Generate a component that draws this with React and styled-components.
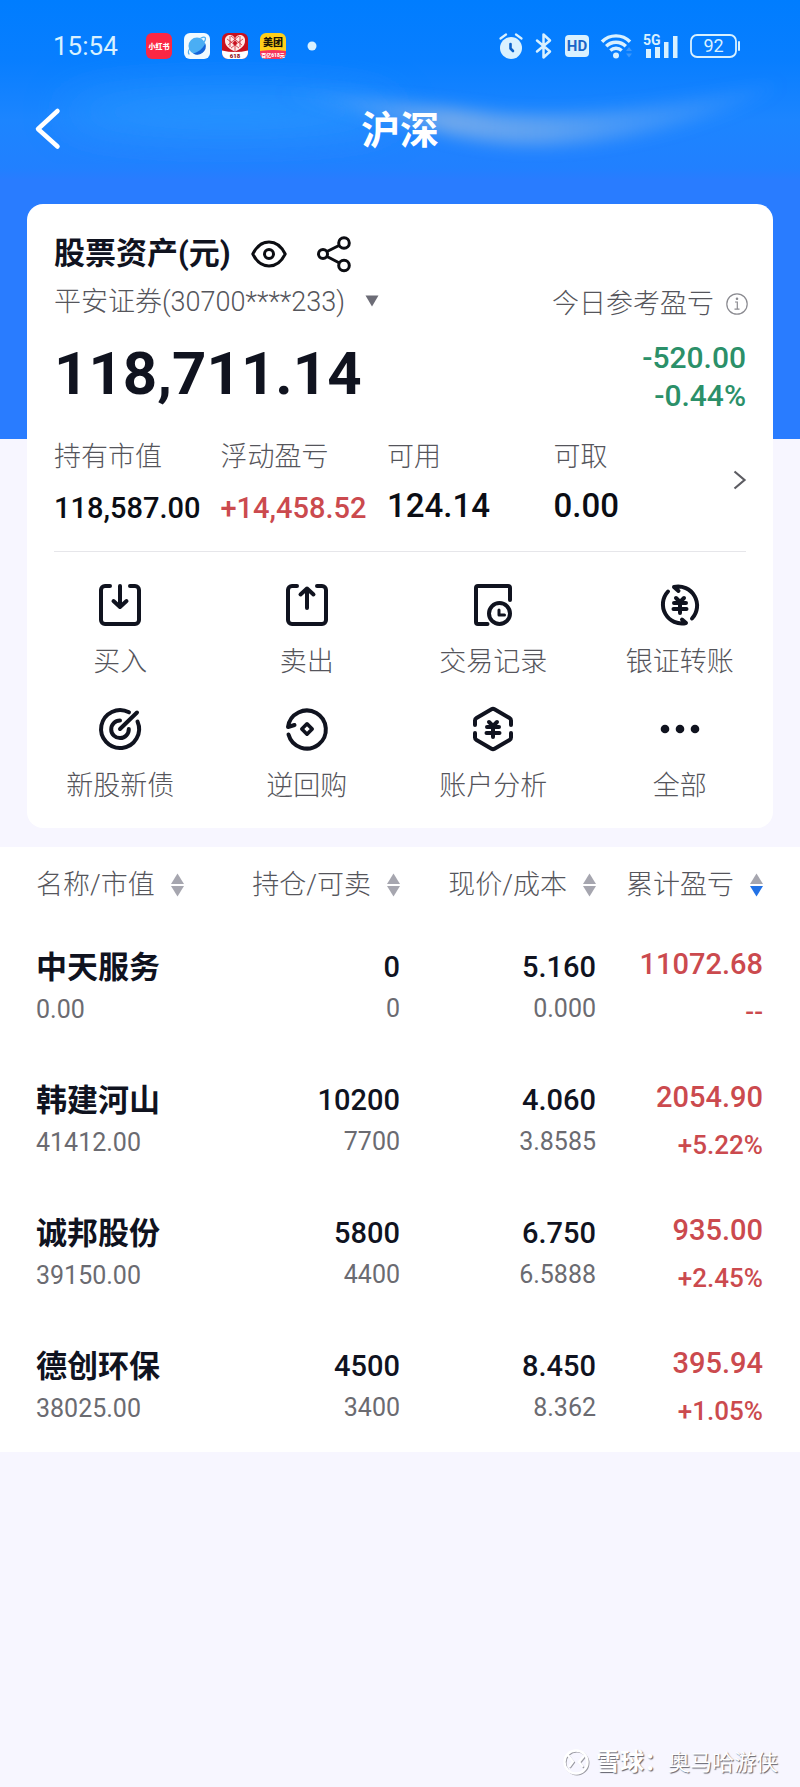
import React from "react";
import styled, { createGlobalStyle } from "styled-components";

const INK = "#10131f";
const GREY = "#55555b";
const RED = "#cb4a4e";
const GREEN = "#2b9069";

const GlobalStyle = createGlobalStyle`
  * { box-sizing: border-box; }
  body {
    margin: 0;
    background: #f7f6ff;
    color: ${INK};
    font-family: Roboto, "Noto Sans CJK SC", sans-serif;
    -webkit-font-smoothing: antialiased;
  }
  button, select {
    margin: 0;
    padding: 0;
    border: 0;
    background: none;
    color: inherit;
    font: inherit;
    cursor: pointer;
  }
  h1, h2, p, dl, dd { margin: 0; }
  svg { display: block; flex: none; overflow: visible; }
`;

const Page = styled.div`
  min-height: 100vh;
  display: flex;
  flex-direction: column;
`;

const Hero = styled.div`
  position: relative;
  padding-bottom: 19px;
  background: linear-gradient(
      #007dff 0,
      #087eff 60px,
      #1c85ff 120px,
      #2180ff 168px,
      #297cff 180px,
      #297cff 100%
    )
    no-repeat 0 0 / 100% 439px;
`;

const Glow = styled.svg`
  position: absolute;
  inset: 0 0 auto;
  width: 100%;
  height: 180px;
  overflow: hidden;
`;

const StatusBar = styled.div`
  position: relative;
  height: 92px;
  padding: 0 60px 0 53px;
  display: flex;
  align-items: center;
  justify-content: space-between;
  color: #d9f1ff;
`;

const StatusGroup = styled.div`
  display: flex;
  align-items: center;
  gap: 12px;
`;

const Clock = styled.time`
  margin-right: 16px;
  font-size: 26px;
  line-height: 32px;
`;

const NavBar = styled.header`
  position: relative;
  height: 74px;
  padding: 0 35px;
  display: grid;
  grid-template-columns: 1fr auto 1fr;
  align-items: center;
  color: #fff;
`;

const BackButton = styled.button`
  justify-self: start;
`;

const NavTitle = styled.h1`
  padding-top: 4px;
  font-size: 39px;
  line-height: 48px;
  font-weight: 700;
`;

const Card = styled.section`
  position: relative;
  margin: 38px 27px 0;
  padding: 26px 0 24px;
  border-radius: 16px;
  background: #fff;
`;

const CardTitleRow = styled.div`
  height: 48px;
  padding: 0 27px;
  display: flex;
  align-items: center;
`;

const CardTitle = styled.h2`
  margin-right: 20px;
  font-size: 31px;
  line-height: 48px;
  font-weight: 700;
`;

const IconButton = styled.button`
  margin-right: 30px;
`;

const Summary = styled.div`
  padding: 0 27px;
  display: flex;
  justify-content: space-between;
`;

const AccountPicker = styled.label`
  position: relative;
  display: block;
  width: fit-content;
  height: 48px;
  color: ${GREY};
`;

const AccountSelect = styled.select`
  appearance: none;
  field-sizing: content;
  height: 48px;
  padding-right: 34px;
  font-size: 27px;
  font-weight: 300;
`;

const PickerArrow = styled.svg`
  position: absolute;
  top: 17px;
  right: 0;
  pointer-events: none;
`;

const Total = styled.p`
  margin-top: 18px;
  font-size: 60px;
  line-height: 60px;
  font-weight: 700;
`;

const Today = styled.div`
  padding-top: 2px;
  display: flex;
  flex-direction: column;
  align-items: flex-end;
`;

const TodayLabel = styled.div`
  margin: 0 -2px 11px 0;
  display: flex;
  align-items: center;
  gap: 12px;
  color: ${GREY};
  font-size: 27px;
  line-height: 48px;
  font-weight: 300;
`;

const TodayValue = styled.p`
  color: ${GREEN};
  font-size: 30px;
  line-height: 38px;
  font-weight: 500;
`;

const Metrics = styled.div`
  margin: 24px 27px 0;
  padding-bottom: 21px;
  display: flex;
  align-items: center;
  border-bottom: 1px solid #e6e6ea;
`;

const MetricList = styled.dl`
  flex: 1;
  display: grid;
  grid-template-columns: repeat(4, 1fr);
`;

const MetricLabel = styled.dt`
  color: ${GREY};
  font-size: 27px;
  line-height: 36px;
  font-weight: 300;
`;

const MetricValue = styled.dd`
  margin-top: 11px;
  color: ${(p) => p.$color || "#0b0d14"};
  font-size: ${(p) => (p.$large ? 33 : 29)}px;
  line-height: ${(p) => (p.$large ? 40 : 44)}px;
  font-weight: 500;
  white-space: nowrap;
`;

const MoreButton = styled.button`
  width: 26px;
  padding-bottom: 10px;
  display: flex;
  justify-content: flex-end;
`;

const Actions = styled.nav`
  padding-top: 32px;
  display: grid;
  grid-template-columns: repeat(4, 1fr);
  row-gap: 28px;
`;

const Action = styled.button`
  display: flex;
  flex-direction: column;
  align-items: center;
  gap: 18px;
`;

const ActionLabel = styled.span`
  color: ${GREY};
  font-size: 27px;
  line-height: 36px;
  font-weight: 300;
`;

const Holdings = styled.table`
  width: 100%;
  table-layout: fixed;
  border-collapse: collapse;
  background: #fff;
`;

const HeadCell = styled.th`
  width: ${(p) => p.$width};
  height: 73px;
  padding: ${(p) => p.$pad || "2px 0 0"};
  text-align: ${(p) => (p.$left ? "left" : "right")};
  color: ${GREY};
  font-size: 27px;
  font-weight: 300;
  white-space: nowrap;
`;

const SortButton = styled.button`
  display: inline-flex;
  align-items: center;
  gap: 16px;
  line-height: 36px;
  vertical-align: middle;
`;

const Row = styled.tr`
  height: 133px;
  vertical-align: top;
`;

const NameCell = styled.th`
  padding: 28px 0 0 36px;
  text-align: left;
  font-weight: 400;
`;

const NumberCell = styled.td`
  padding: 27px 0 0;
  text-align: right;
`;

const ProfitCell = styled.td`
  padding: 24px 37px 0 0;
  text-align: right;
  color: ${RED};
`;

const StockName = styled.div`
  font-size: 31px;
  line-height: 40px;
  font-weight: 700;
`;

const Figure = styled.div`
  font-size: 29px;
  line-height: 40px;
  font-weight: 500;
`;

const SubFigure = styled.div`
  margin-top: ${(p) => (p.$profit ? 10 : 4)}px;
  color: ${(p) => (p.$profit ? RED : "#6b6b71")};
  font-size: ${(p) => (p.$profit ? 26 : 25)}px;
  line-height: 36px;
  font-weight: ${(p) => (p.$profit ? 500 : 400)};
`;

const Footer = styled.footer`
  margin-top: auto;
  padding: 40px 22px 8px;
  display: flex;
  align-items: center;
  justify-content: flex-end;
  gap: 5px;
  color: #fff;
  font-size: 22px;
  line-height: 32px;
  text-shadow: 1px 1px 1px rgba(80, 80, 90, 0.9);
`;

const Brand = styled.span`
  font-size: 24px;
  font-weight: 700;
`;

/* ---------- status bar icons ---------- */

const AppIcon = ({ label, bg, children }) => (
  <svg width="26" height="26" viewBox="0 0 26 26" role="img" aria-label={label}>
    <rect width="26" height="26" rx="6" fill={bg} />
    {children}
  </svg>
);

const RedBookIcon = () => (
  <AppIcon label="小红书" bg="#fb2744">
    <text x="13" y="16" fontSize="7" fontWeight="900" textAnchor="middle" fill="#fff">小红书</text>
  </AppIcon>
);

const BrowserIcon = () => (
  <AppIcon label="浏览器" bg="#f1faff">
    <circle cx="13" cy="13" r="8.500" fill="#4aaef4" />
    <path d="M21.300 10.500A8.500 8.500 0 0 1 9 20.500C14 19.500 18.500 16 21.300 10.500Z" fill="#1463d8" />
    <path d="M5 21C3.500 19.500 5 16 7.500 12.500M17 5c2-1 3.500-1.200 4.200-.4.600.8.200 2.300-.8 4" fill="none" stroke="#4aaef4" strokeWidth="1.200" strokeLinecap="round" />
  </AppIcon>
);

const HeartIcon = () => (
  <AppIcon label="618" bg="#c8111f">
    <path d="M13 18.500C7 16 3 12.500 3 8a5 5 0 0 1 10-2A5 5 0 0 1 23 8c0 4.500-4 8-10 10.500Z" fill="#ffe9e6" />
    <path d="M5 6l12 9M9 3l11 9M21 6L9 15M17 3L6 12M13 6v12M8 3v11M18 3v11" stroke="#c8111f" strokeWidth=".7" />
    <circle cx="13" cy="10" r="2" fill="#c8111f" />
    <path d="M0 17.500Q13 20.500 26 17.500V20a6 6 0 0 1-6 6H6a6 6 0 0 1-6-6Z" fill="#fff" />
    <text x="13" y="25" fontSize="6" fontWeight="900" textAnchor="middle" fill="#8e1119">618</text>
  </AppIcon>
);

const MeituanIcon = () => (
  <AppIcon label="美团" bg="#ffcf1a">
    <path d="M0 18q13-2 26 0v2a6 6 0 0 1-6 6H6a6 6 0 0 1-6-6Z" fill="#f7365c" />
    <text x="13" y="13" fontSize="10" fontWeight="900" textAnchor="middle" fill="#1c1606">美团</text>
    <text x="13" y="24" fontSize="5" fontWeight="900" textAnchor="middle" fill="#fff">百亿618元</text>
  </AppIcon>
);

const Dot = () => (
  <svg width="26" height="26" viewBox="0 0 26 26" aria-hidden="true">
    <circle cx="14" cy="13" r="4.500" fill="#d9f1ff" />
  </svg>
);

const AlarmIcon = () => (
  <svg width="24" height="26" viewBox="0 0 24 26" aria-label="闹钟" role="img">
    <circle cx="12" cy="15" r="11" fill="currentColor" />
    <path d="M1.500 5.500L7 1.500M22.500 5.500L17 1.500" stroke="currentColor" strokeWidth="2.200" strokeLinecap="round" />
    <path d="M11.500 11v4.500l2.500 2.500" fill="none" stroke="#0a60c8" strokeWidth="2.600" strokeLinecap="round" strokeLinejoin="round" />
  </svg>
);

const BluetoothIcon = () => (
  <svg width="18" height="26" viewBox="0 0 18 26" aria-label="蓝牙" role="img">
    <path d="M2 7.500l13 11-6.500 6V1.500l6.500 6-13 11" fill="none" stroke="currentColor" strokeWidth="2.500" strokeLinejoin="round" strokeLinecap="round" />
  </svg>
);

const HdIcon = () => (
  <svg width="24" height="26" viewBox="0 0 24 26" aria-label="HD" role="img">
    <rect y="2" width="24" height="22" rx="4" fill="currentColor" />
    <text x="12" y="18" fontSize="15" fontWeight="700" textAnchor="middle" fill="#1a66c8">HD</text>
  </svg>
);

const WifiIcon = () => (
  <svg width="30" height="26" viewBox="0 0 30 26" aria-label="Wi-Fi" role="img">
    <g fill="none" stroke="currentColor" strokeWidth="3.400">
      <path d="M1 8.800a19.500 19.500 0 0 1 28 0" />
      <path d="M5.200 13.200a14 14 0 0 1 19.600 0" />
      <path d="M9.300 17.500a8.500 8.500 0 0 1 11.400 0" />
    </g>
    <circle cx="15" cy="22.500" r="3" fill="currentColor" />
    <path d="M25 18l3-4 3 4zM25 20.500l3 4 3-4z" fill="#3c97fb" />
  </svg>
);

const SignalIcon = () => (
  <svg width="35" height="26" viewBox="0 0 35 26" aria-label="5G" role="img">
    <text x="0" y="12" fontSize="14" fontWeight="700" fill="currentColor">5G</text>
    <path d="M3 16h5v9H3zM12 14h5v11h-5zM21 9h4.500v16H21zM30 3h4.500v22H30z" fill="currentColor" />
  </svg>
);

const BatteryIcon = () => (
  <svg width="50" height="24" viewBox="0 0 50 24" aria-label="92%" role="img">
    <rect x="1" y="1" width="45" height="22" rx="6" fill="none" stroke="currentColor" strokeWidth="1.800" />
    <path d="M49 8v8" stroke="currentColor" strokeWidth="2" strokeLinecap="round" />
    <text x="23.500" y="18" fontSize="18" textAnchor="middle" fill="currentColor">92</text>
  </svg>
);

/* ---------- action icons ---------- */

const Glyph = ({ children }) => (
  <svg width="42" height="42" viewBox="0 0 42 42" fill="none" stroke={INK} strokeWidth="4" strokeLinecap="round" strokeLinejoin="round" aria-hidden="true">
    {children}
  </svg>
);

const Yuan = () => (
  <path d="M17 14l4 4 4-4M15 19h12M14.500 25h13M21 19v10" strokeWidth="4" />
);

const actions = [
  {
    label: "买入",
    icon: (
      <Glyph>
        <path d="M11 2H6a4 4 0 0 0-4 4v30a4 4 0 0 0 4 4h30a4 4 0 0 0 4-4V6a4 4 0 0 0-4-4h-5" />
        <path d="M21 2v20.500M14.500 17l6.500 6 6.500-6" />
      </Glyph>
    ),
  },
  {
    label: "卖出",
    icon: (
      <Glyph>
        <path d="M11 2H6a4 4 0 0 0-4 4v30a4 4 0 0 0 4 4h30a4 4 0 0 0 4-4V6a4 4 0 0 0-4-4h-5" />
        <path d="M21 24V4.500M14.500 10.500L21 4.500l6.500 6" />
      </Glyph>
    ),
  },
  {
    label: "交易记录",
    icon: (
      <Glyph>
        <path d="M38 16V4a2 2 0 0 0-2-2H6a2 2 0 0 0-2 2v34a2 2 0 0 0 2 2h9.500" />
        <circle cx="27.500" cy="29.500" r="10.500" />
        <path d="M27 26v5h5.500" strokeWidth="3" />
      </Glyph>
    ),
  },
  {
    label: "银证转账",
    icon: (
      <Glyph>
        <path d="M9 7.500A19 19 0 0 0 27 39L23 35.500" />
        <path d="M33 34.500A19 19 0 0 0 15 3L19.500 7" />
        <Yuan />
      </Glyph>
    ),
  },
  {
    label: "新股新债",
    icon: (
      <Glyph>
        <path d="M30 4.300A19 19 0 1 0 38.500 13.500" />
        <path d="M21 12.500a8.800 8.800 0 1 0 8.800 8.500" />
        <path d="M21 21L38 4.500" />
      </Glyph>
    ),
  },
  {
    label: "逆回购",
    icon: (
      <Glyph>
        <path d="M2.500 26.500A19 19 0 1 0 2 19L8.500 17" />
        <path d="M21 15.800l5.200 5.200-5.200 5.200-5.200-5.200z" strokeWidth="3.600" />
      </Glyph>
    ),
  },
  {
    label: "账户分析",
    icon: (
      <Glyph>
        <path d="M3 17v-4.500a3 3 0 0 1 1.500-2.600L19.500 1.300a3 3 0 0 1 3 0l15 8.600A3 3 0 0 1 39 12.500V17" />
        <path d="M3 25v4.500a3 3 0 0 0 1.500 2.600l15 8.600a3 3 0 0 0 3 0l15-8.600A3 3 0 0 0 39 29.500V25" />
        <Yuan />
      </Glyph>
    ),
  },
  {
    label: "全部",
    icon: (
      <Glyph>
        <g fill={INK} stroke="none">
          <circle cx="6" cy="21" r="4.300" />
          <circle cx="21" cy="21" r="4.300" />
          <circle cx="36" cy="21" r="4.300" />
        </g>
      </Glyph>
    ),
  },
];

const metrics = [
  { label: "持有市值", value: "118,587.00" },
  { label: "浮动盈亏", value: "+14,458.52", color: RED },
  { label: "可用", value: "124.14", large: true },
  { label: "可取", value: "0.00", large: true },
];

const columns = [
  { label: "名称/市值", width: "25%", left: true, pad: "2px 0 0 36px" },
  { label: "持仓/可卖", width: "25%" },
  { label: "现价/成本", width: "24.5%" },
  { label: "累计盈亏", width: "25.5%", pad: "2px 37px 0 0", active: true },
];

const holdings = [
  { name: "中天服务", worth: "0.00", held: "0", sellable: "0", price: "5.160", cost: "0.000", profit: "11072.68", rate: "--" },
  { name: "韩建河山", worth: "41412.00", held: "10200", sellable: "7700", price: "4.060", cost: "3.8585", profit: "2054.90", rate: "+5.22%" },
  { name: "诚邦股份", worth: "39150.00", held: "5800", sellable: "4400", price: "6.750", cost: "6.5888", profit: "935.00", rate: "+2.45%" },
  { name: "德创环保", worth: "38025.00", held: "4500", sellable: "3400", price: "8.450", cost: "8.362", profit: "395.94", rate: "+1.05%" },
];

const SortArrows = ({ active }) => (
  <svg width="13" height="24" viewBox="0 0 13 24" aria-hidden="true">
    <path d="M6.500 0.500L13 11H0z" fill="#a6a6af" />
    <path d="M0 13h13L6.500 23.500z" fill={active ? "#2272e6" : "#a6a6af"} />
  </svg>
);

export default function App() {
  return (
    <Page>
      <GlobalStyle />
      <Hero>
        <Glow viewBox="0 0 800 180" preserveAspectRatio="none" aria-hidden="true">
          <defs>
            <filter id="soft" x="-20%" y="-60%" width="140%" height="220%">
              <feGaussianBlur stdDeviation="8" />
            </filter>
            <filter id="wide" x="-40%" y="-80%" width="180%" height="260%">
              <feGaussianBlur stdDeviation="22" />
            </filter>
            <linearGradient id="streak">
              <stop offset="0" stopColor="#6fb0ff" stopOpacity="0" />
              <stop offset=".35" stopColor="#8bb4e6" stopOpacity=".75" />
              <stop offset=".55" stopColor="#86b4ea" stopOpacity=".6" />
              <stop offset="1" stopColor="#5aa2f8" stopOpacity=".15" />
            </linearGradient>
          </defs>
          <ellipse cx="230" cy="112" rx="170" ry="20" fill="#2f9dff" opacity=".7" filter="url(#wide)" />
          <path
            d="M270 92C350 96 420 104 500 114C600 120 690 100 780 84C720 120 620 146 530 145C440 142 390 112 270 92Z"
            fill="url(#streak)"
            filter="url(#soft)"
          />
        </Glow>

        <StatusBar>
          <StatusGroup>
            <Clock>15:54</Clock>
            <RedBookIcon />
            <BrowserIcon />
            <HeartIcon />
            <MeituanIcon />
            <Dot />
          </StatusGroup>
          <StatusGroup>
            <AlarmIcon />
            <BluetoothIcon />
            <HdIcon />
            <WifiIcon />
            <SignalIcon />
            <BatteryIcon />
          </StatusGroup>
        </StatusBar>

        <NavBar>
          <BackButton aria-label="返回">
            <svg width="26" height="42" viewBox="0 0 26 42" fill="none" stroke="#fff" strokeWidth="4.500" strokeLinecap="round" strokeLinejoin="round">
              <path d="M22.500 3L3 21l19.500 17.500" />
            </svg>
          </BackButton>
          <NavTitle>沪深</NavTitle>
        </NavBar>

        <Card>
          <CardTitleRow>
            <CardTitle>股票资产(元)</CardTitle>
            <IconButton aria-label="隐藏金额">
              <svg width="36" height="28" viewBox="0 0 36 28" fill="none" stroke="#0c0d12" strokeWidth="3">
                <path d="M1.800 14C6 5.500 11 2 18 2s12 3.500 16.200 12C30 22.500 25 26 18 26S6 22.500 1.800 14Z" strokeLinejoin="round" />
                <circle cx="18" cy="14" r="4.500" />
              </svg>
            </IconButton>
            <IconButton aria-label="分享">
              <svg width="34" height="36" viewBox="0 0 34 36" fill="none" stroke="#0c0d12" strokeWidth="3">
                <circle cx="6" cy="18" r="4.500" />
                <circle cx="27" cy="7" r="5.300" />
                <circle cx="27" cy="29.500" r="5.300" />
                <path d="M10 15.500L22 9.500M10 20.500l12.500 6.500" />
              </svg>
            </IconButton>
          </CardTitleRow>

          <Summary>
            <div>
              <AccountPicker>
                <AccountSelect aria-label="证券账户">
                  <option>平安证券(30700****233)</option>
                </AccountSelect>
                <PickerArrow width="14" height="12" viewBox="0 0 14 12" aria-hidden="true">
                  <path d="M0.500 0.500h13L7 11.500z" fill="#6c6c76" />
                </PickerArrow>
              </AccountPicker>
              <Total>118,711.14</Total>
            </div>
            <Today>
              <TodayLabel>
                今日参考盈亏
                <svg width="22" height="22" viewBox="0 0 22 22" fill="none" stroke="#8a8a90" strokeWidth="1.200" aria-hidden="true">
                  <circle cx="11" cy="11" r="10.200" />
                  <path d="M9 9h2.300v7M8.500 16.200h5" />
                  <circle cx="11" cy="5.800" r=".7" fill="#8a8a90" />
                </svg>
              </TodayLabel>
              <TodayValue>-520.00</TodayValue>
              <TodayValue>-0.44%</TodayValue>
            </Today>
          </Summary>

          <Metrics>
            <MetricList>
              {metrics.map((m) => (
                <div key={m.label}>
                  <MetricLabel>{m.label}</MetricLabel>
                  <MetricValue $color={m.color} $large={m.large}>{m.value}</MetricValue>
                </div>
              ))}
            </MetricList>
            <MoreButton aria-label="查看资产详情">
              <svg width="13" height="20" viewBox="0 0 13 20" fill="none" stroke="#5c5c62" strokeWidth="2.200">
                <path d="M1.500 1.500l10 8.500-10 8.500" />
              </svg>
            </MoreButton>
          </Metrics>

          <Actions>
            {actions.map((a) => (
              <Action key={a.label}>
                {a.icon}
                <ActionLabel>{a.label}</ActionLabel>
              </Action>
            ))}
          </Actions>
        </Card>
      </Hero>

      <Holdings>
        <thead>
          <tr>
            {columns.map((c) => (
              <HeadCell key={c.label} scope="col" $width={c.width} $left={c.left} $pad={c.pad}>
                <SortButton>
                  {c.label}
                  <SortArrows active={c.active} />
                </SortButton>
              </HeadCell>
            ))}
          </tr>
        </thead>
        <tbody>
          {holdings.map((h) => (
            <Row key={h.name}>
              <NameCell scope="row">
                <StockName>{h.name}</StockName>
                <SubFigure>{h.worth}</SubFigure>
              </NameCell>
              <NumberCell>
                <Figure>{h.held}</Figure>
                <SubFigure>{h.sellable}</SubFigure>
              </NumberCell>
              <NumberCell>
                <Figure>{h.price}</Figure>
                <SubFigure>{h.cost}</SubFigure>
              </NumberCell>
              <ProfitCell>
                <Figure>{h.profit}</Figure>
                <SubFigure $profit>{h.rate}</SubFigure>
              </ProfitCell>
            </Row>
          ))}
        </tbody>
      </Holdings>

      <Footer>
        <svg width="28" height="28" viewBox="0 0 28 28" fill="none" aria-hidden="true">
          <g stroke="#9a9aa2" strokeWidth="2" transform="translate(1 1)">
            <circle cx="13" cy="13" r="11.500" />
            <path d="M4 5l6 7.500L6 18M21 7l-5 6 4 5" />
          </g>
          <g stroke="#fff" strokeWidth="2.400">
            <circle cx="13" cy="13" r="11.500" />
            <path d="M4 5l6 7.500L6 18M21 7l-5 6 4 5" />
          </g>
        </svg>
        <span>
          <Brand>雪球：</Brand>奥马哈游侠
        </span>
      </Footer>
    </Page>
  );
}
